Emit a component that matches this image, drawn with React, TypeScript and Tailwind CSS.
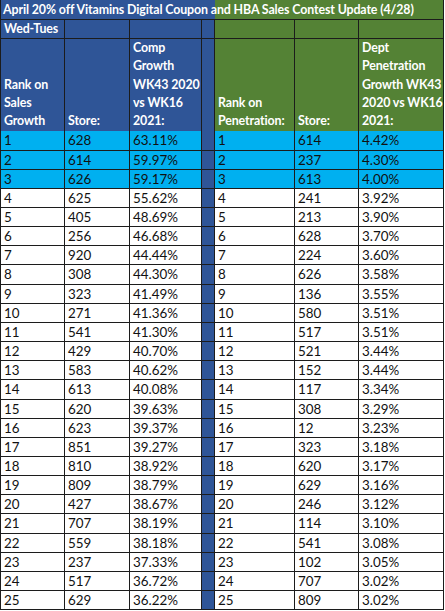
import React from "react";

const left: [string, string, string][] = [
  ["1", "628", "63.11%"],
  ["2", "614", "59.97%"],
  ["3", "626", "59.17%"],
  ["4", "625", "55.62%"],
  ["5", "405", "48.69%"],
  ["6", "256", "46.68%"],
  ["7", "920", "44.44%"],
  ["8", "308", "44.30%"],
  ["9", "323", "41.49%"],
  ["10", "271", "41.36%"],
  ["11", "541", "41.30%"],
  ["12", "429", "40.70%"],
  ["13", "583", "40.62%"],
  ["14", "613", "40.08%"],
  ["15", "620", "39.63%"],
  ["16", "623", "39.37%"],
  ["17", "851", "39.27%"],
  ["18", "810", "38.92%"],
  ["19", "809", "38.79%"],
  ["20", "427", "38.67%"],
  ["21", "707", "38.19%"],
  ["22", "559", "38.18%"],
  ["23", "237", "37.33%"],
  ["24", "517", "36.72%"],
  ["25", "629", "36.22%"],
];

const right: [string, string, string][] = [
  ["1", "614", "4.42%"],
  ["2", "237", "4.30%"],
  ["3", "613", "4.00%"],
  ["4", "241", "3.92%"],
  ["5", "213", "3.90%"],
  ["6", "628", "3.70%"],
  ["7", "224", "3.60%"],
  ["8", "626", "3.58%"],
  ["9", "136", "3.55%"],
  ["10", "580", "3.51%"],
  ["11", "517", "3.51%"],
  ["12", "521", "3.44%"],
  ["13", "152", "3.44%"],
  ["14", "117", "3.34%"],
  ["15", "308", "3.29%"],
  ["16", "12", "3.23%"],
  ["17", "323", "3.18%"],
  ["18", "620", "3.17%"],
  ["19", "629", "3.16%"],
  ["20", "246", "3.12%"],
  ["21", "114", "3.10%"],
  ["22", "541", "3.08%"],
  ["23", "102", "3.05%"],
  ["24", "707", "3.02%"],
  ["25", "809", "3.02%"],
];

const tallRows = new Set([0, 7, 13, 20]);

const cols = "grid grid-cols-[64px_65px_72px_13px_80px_64px_85px]";
const cell = "border-r border-b border-[#1c1c1c] pl-[3px] overflow-visible whitespace-nowrap";

export default function App() {
  return (
    <div
      className="bg-white w-[445px] h-[611px] text-[13.4px] leading-[18.3px]"
      style={{ fontFamily: "Lato, 'Open Sans', sans-serif" }}
    >
      <div className="w-[444px] border-l border-[#1c1c1c]">
        {/* Title */}
        <div className="flex h-[20px] border-b border-[#1c1c1c] text-white font-bold text-[12.4px] tracking-[-0.12px]">
          <div className="w-[214px] bg-[#2f5597] relative">
            <span className="absolute left-[2px] top-[1px] whitespace-nowrap z-10">
              April 20% off Vitamins Digital Coupon and HBA Sales Contest Update (4/28)
            </span>
          </div>
          <div className="flex-1 bg-[#548235] border-r border-[#1c1c1c]" />
        </div>
        {/* Wed-Tues */}
        <div className={`${cols} h-[19px] text-white font-bold text-[12.4px] tracking-[-0.12px]`}>
          <div className={`${cell} bg-[#2f5597] flex items-center`}>Wed-Tues</div>
          <div className={`${cell} bg-[#2f5597]`} />
          <div className={`${cell} bg-[#2f5597]`} />
          <div className={`${cell} bg-[#2f5597]`} />
          <div className={`${cell} bg-[#548235]`} />
          <div className={`${cell} bg-[#548235]`} />
          <div className={`${cell} bg-[#548235]`} />
        </div>
        {/* Header */}
        <div className={`${cols} h-[92px] text-white font-bold text-[12.4px] tracking-[-0.12px]`}>
          <div className={`${cell} bg-[#2f5597] flex items-end pb-[1px]`}>
            <span>Rank on<br />Sales<br />Growth</span>
          </div>
          <div className={`${cell} bg-[#2f5597] flex items-end pb-[1px]`}>
            <span>Store:</span>
          </div>
          <div className={`${cell} bg-[#2f5597] flex items-end pb-[1px]`}>
            <span>Comp<br />Growth<br />WK43 2020<br />vs WK16<br />2021:</span>
          </div>
          <div className={`${cell} bg-[#2f5597]`} />
          <div className={`${cell} bg-[#548235] flex items-end pb-[1px]`}>
            <span>Rank on<br />Penetration:</span>
          </div>
          <div className={`${cell} bg-[#548235] flex items-end pb-[1px]`}>
            <span>Store:</span>
          </div>
          <div className={`${cell} bg-[#548235] flex items-end pb-[1px]`}>
            <span>Dept<br />Penetration<br />Growth WK43<br />2020 vs WK16<br />2021:</span>
          </div>
        </div>
        {/* Data */}
        {left.map((l, i) => {
          const r = right[i];
          const bg = i < 3 ? "bg-[#00b0f0]" : "bg-white";
          return (
            <div key={i} className={`${cols} ${tallRows.has(i) ? "h-[20px]" : "h-[19px]"} text-[#111]`}>
              <div className={`${cell} ${bg} flex items-center`}>{l[0]}</div>
              <div className={`${cell} ${bg} flex items-center`}>{l[1]}</div>
              <div className={`${cell} ${bg} flex items-center`}>{l[2]}</div>
              <div className={`${cell} bg-[#2f5597]`} />
              <div className={`${cell} ${bg} flex items-center`}>{r[0]}</div>
              <div className={`${cell} ${bg} flex items-center`}>{r[1]}</div>
              <div className={`${cell} ${bg} flex items-center`}>{r[2]}</div>
            </div>
          );
        })}
      </div>
    </div>
  );
}
